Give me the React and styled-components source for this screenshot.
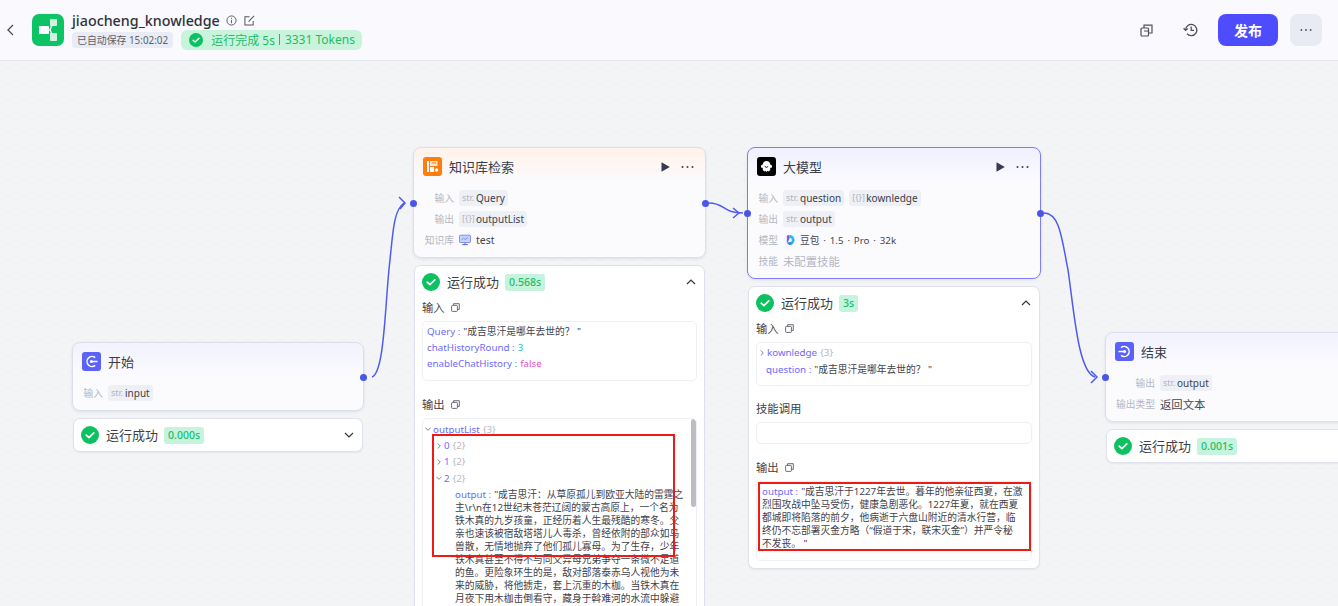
import React from "react";
import styled, { createGlobalStyle } from "styled-components";

const GlobalStyle = createGlobalStyle`
  html, body {
    margin: 0;
    padding: 0;
    height: 100%;
    overflow: hidden;
  }
  body {
    font-family: "Noto Sans", "Noto Sans CJK SC", sans-serif;
    color: #33353f;
  }
  #root {
    height: 100%;
  }
`;

const Page = styled.div`
  display: flex;
  flex-direction: column;
  width: 1338px;
  height: 606px;
  overflow: hidden;
`;

const Header = styled.header`
  position: relative;
  z-index: 1;
  flex: 0 0 60px;
  box-sizing: border-box;
  height: 60px;
  display: flex;
  align-items: center;
  justify-content: space-between;
  padding: 0 16px 0 7px;
  background: #f9f9fe;
  box-shadow: 0 1px 0 #e6e7ec;
`;

const HeaderLeft = styled.div`
  display: flex;
  align-items: center;
`;

const BackButton = styled.div`
  display: flex;
  width: 10px;
  margin-right: 15px;
  color: #4b4d57;
`;

const Logo = styled.div`
  width: 32px;
  height: 32px;
  border-radius: 7px;
  background: #0cc463;
  display: flex;
  align-items: center;
  justify-content: center;
  margin-right: 8px;
`;

const TitleBlock = styled.div`
  display: flex;
  flex-direction: column;
  gap: 1px;
  margin-top: 1px;
`;

const TitleRow = styled.div`
  display: flex;
  align-items: center;
  height: 17px;
  gap: 6px;
`;

const AppName = styled.span`
  font-size: 14.3px;
  font-weight: 500;
  line-height: 17px;
  color: #30323c;
`;

const EditGlyph = styled.svg`
  margin-left: 1px;
`;

const MetaRow = styled.div`
  display: flex;
  align-items: center;
  gap: 8px;
`;

const SaveTag = styled.span`
  height: 16px;
  line-height: 16px;
  padding: 0 5px;
  border-radius: 4px;
  background: #e9ecf5;
  color: #5d5f6a;
  font-size: 9.9px;
  white-space: nowrap;
`;

const StatusTag = styled.span`
  height: 20px;
  display: flex;
  align-items: center;
  padding: 0 7px 0 8px;
  border-radius: 6px;
  background: #c9f4dc;
  color: #1dbd67;
  font-size: 12px;
  white-space: nowrap;
`;

const StatusDivider = styled.span`
  width: 1px;
  height: 11px;
  margin: 0 5px 0 4px;
  background: #1dbd67;
`;

const StatusIcon = styled.span`
  display: flex;
  margin-right: 8px;
`;

const HeaderRight = styled.div`
  display: flex;
  align-items: center;
`;

const ToolIcon = styled.div`
  display: flex;
  width: 20px;
  justify-content: center;
  margin-right: ${(props) => props.$gap}px;
  color: #4f515c;
`;

const PublishButton = styled.button`
  width: 60px;
  height: 32px;
  border: 0;
  border-radius: 8px;
  background: #4d4dff;
  color: #fff;
  font-family: inherit;
  font-size: 14px;
  font-weight: 700;
  margin-right: 12px;
  padding: 0;
`;

const MoreButton = styled.div`
  width: 32px;
  height: 32px;
  border-radius: 8px;
  background: #e9ebf4;
  display: flex;
  align-items: center;
  justify-content: center;
  color: #4f515c;
`;

const Canvas = styled.main`
  position: relative;
  flex: 1;
  overflow: hidden;
  background-color: #f3f4f6;
  background-image: radial-gradient(#eceef1 1px, transparent 1px);
  background-size: 16px 16px;
`;

const Edges = styled.svg`
  position: absolute;
  left: 0;
  top: -60px;
  width: 1338px;
  height: 606px;
  pointer-events: none;
`;

/* nodes sit on a free canvas, their place is the content */
const NodeColumn = styled.section`
  position: absolute;
  left: ${(props) => props.$x}px;
  top: ${(props) => props.$y - 60}px;
  width: ${(props) => props.$w}px;
  display: flex;
  flex-direction: column;
  gap: 7px;
`;

const Node = styled.div`
  position: relative;
  box-sizing: border-box;
  height: ${(props) => props.$h}px;
  padding: 9px 10px 0 9px;
  border-radius: 8px;
  border: 1px solid ${(props) => (props.$active ? "#7d7dfb" : "#dcdfea")};
  box-shadow: 0 1px 3px rgba(40, 50, 90, 0.1);
  background: linear-gradient(
    180deg,
    ${(props) => props.$tint} 0,
    #fbfbfe 36px
  );
`;

const NodeHead = styled.div`
  display: flex;
  align-items: center;
  height: 19px;
  gap: 7px;
  margin-bottom: 11px;
`;

const NodeIcon = styled.div`
  flex: 0 0 19px;
  height: 19px;
  border-radius: 3px;
  background: ${(props) => props.$bg};
  display: flex;
  align-items: center;
  justify-content: center;
`;

const NodeTitle = styled.span`
  flex: 1;
  padding-top: 2px;
  font-size: 13px;
  color: #3a3c46;
  line-height: 19px;
`;

const NodeActions = styled.div`
  display: flex;
  align-items: center;
  gap: 11px;
  color: #3a3f50;
  margin-right: 1px;
`;

const FieldRow = styled.div`
  display: flex;
  align-items: center;
  height: 21px;
  font-size: 9.75px;
  gap: 5px;
`;

const FieldLabel = styled.span`
  flex: 0 0 ${(props) => props.$w}px;
  text-align: right;
  color: #b4b7c2;
  white-space: nowrap;
`;

const FieldText = styled.span`
  color: ${(props) => (props.$muted ? "#b4b7c2" : "#44464f")};
  font-size: ${(props) => props.$size}px;
  word-spacing: ${(props) => props.$spread || 0}px;
  white-space: nowrap;
`;

const TypeTag = styled.span`
  display: inline-flex;
  align-items: center;
  height: 16px;
  padding: 0 3px;
  gap: 1px;
  border-radius: 3px;
  background: #eef0f6;
  color: #3d3f49;
  font-size: 10px;
`;

const TypeMark = styled.span`
  flex: 0 0 13px;
  color: #b2b5c2;
  font-size: 9px;
  white-space: nowrap;
`;

const Port = styled.span`
  position: absolute;
  width: 7px;
  height: 7px;
  border-radius: 50%;
  background: #4a56e8;
  top: ${(props) => props.$top}px;
  ${(props) => (props.$side === "left" ? "left: -4px;" : "right: -4px;")}
`;

const Result = styled.div`
  position: relative;
  box-sizing: border-box;
  margin: 0 1px;
  padding: ${(props) => (props.$open ? "7px 7px 8px" : "7px")};
  height: ${(props) => (props.$h ? `${props.$h}px` : "auto")};
  border: 1px solid #dfe2ec;
  border-radius: 7px;
  background: #fff;
  box-shadow: 0 1px 2px rgba(40, 50, 90, 0.07);
`;

const ResultHead = styled.div`
  display: flex;
  align-items: center;
  height: 18px;
  gap: 7px;
`;

const ResultTitle = styled.span`
  margin-top: -1px;
  font-size: 13px;
  color: #3d3f49;
  white-space: nowrap;
`;

const TimeBadge = styled.span`
  height: 17px;
  line-height: 17px;
  margin-left: -1px;
  padding: 0 4px;
  border-radius: 3px;
  background: #c6f3dd;
  color: #1dbd67;
  font-size: 10.5px;
  font-weight: 500;
`;

const Chevron = styled.div`
  margin-left: auto;
  margin-right: 1px;
  display: flex;
  color: #33353f;
`;

const SectionTitle = styled.div`
  display: flex;
  align-items: center;
  gap: 6px;
  height: 14px;
  margin: ${(props) => props.$mt}px 0 7px;
  font-size: 11.375px;
  color: #3d3f49;
`;

const JsonBox = styled.div`
  position: relative;
  box-sizing: border-box;
  height: ${(props) => props.$h}px;
  padding: ${(props) => props.$pad || "1px 4px"};
  border: 1px solid #eff0f5;
  border-radius: 5px;
  background: #fff;
  overflow: hidden;
  font-size: 9.75px;
`;

const JsonLine = styled.div`
  display: flex;
  align-items: center;
  height: 16.4px;
  padding-left: ${(props) => props.$indent || 0}px;
  white-space: nowrap;
`;

const Key = styled.span`
  color: #6b6bfa;
  margin-right: ${(props) => (props.$tight ? 3 : 0)}px;
`;

const Quoted = styled.span`
  color: #3f414b;
`;

const NumberValue = styled.span`
  color: #2bbcd2;
`;

const BoolValue = styled.span`
  color: #e052c7;
`;

const Count = styled.span`
  color: #b6b9c4;
  margin-left: 3px;
`;

const Caret = styled.span`
  display: inline-flex;
  width: 6px;
  margin-right: 2px;
  color: #60626c;
`;

const LongText = styled.div`
  margin-top: ${(props) => props.$mt || 0}px;
  padding-left: ${(props) => props.$indent}px;
  font-size: 9.75px;
  line-height: 13px;
  color: #3f414b;
  white-space: nowrap;
`;

const ScrollThumb = styled.div`
  position: absolute;
  right: 0;
  top: 0;
  width: 5px;
  height: 88px;
  border-radius: 3px;
  background: #bcbdc1;
`;

const Marker = styled.div`
  position: absolute;
  left: ${(props) => props.$x}px;
  top: ${(props) => props.$y - 60}px;
  width: ${(props) => props.$w}px;
  height: ${(props) => props.$h}px;
  box-sizing: border-box;
  border: 2px solid #f01a14;
  pointer-events: none;
`;

const DoubaoSlot = styled.span`
  display: flex;
  margin-left: 2px;
`;

const CheckGlyph = styled.svg`
  flex-shrink: 0;
`;

const Play = () => (
  <svg width="9" height="10" viewBox="0 0 9 10">
    <path d="M0.5 0.3 L8.8 5 L0.5 9.7 Z" fill="#363b4d" />
  </svg>
);

const Dots = ({ size = 13 }) => (
  <svg width={size} height="4" viewBox="0 0 13 4" fill="currentColor">
    <circle cx="1.5" cy="2" r="1" />
    <circle cx="6.5" cy="2" r="1" />
    <circle cx="11.5" cy="2" r="1" />
  </svg>
);

const CheckCircle = ({ size = 18 }) => (
  <CheckGlyph width={size} height={size} viewBox="0 0 18 18">
    <circle cx="9" cy="9" r="9" fill="#0cc15f" />
    <path
      d="M5.2 9.2 L7.9 11.6 L12.8 6.8"
      fill="none"
      stroke="#fff"
      strokeWidth="1.7"
      strokeLinecap="round"
      strokeLinejoin="round"
    />
  </CheckGlyph>
);

const ChevronIcon = ({ up }) => (
  <svg width="10" height="6" viewBox="0 0 10 6">
    <path
      d={up ? "M1 5 L5 1 L9 5" : "M1 1 L5 5 L9 1"}
      fill="none"
      stroke="currentColor"
      strokeWidth="1.2"
    />
  </svg>
);

const CaretIcon = ({ open }) => (
  <svg width="6" height="6" viewBox="0 0 7 7">
    <path
      d={open ? "M0.5 2 L3.5 5 L6.5 2" : "M2 0.5 L5 3.5 L2 6.5"}
      fill="none"
      stroke="currentColor"
      strokeWidth="0.9"
    />
  </svg>
);

const CopyIcon = () => (
  <svg width="9" height="9" viewBox="0 0 9 9" fill="none" stroke="#5a5c66" strokeWidth="0.9">
    <rect x="0.6" y="2.4" width="5.8" height="6" rx="0.8" />
    <path d="M2.6 2.2 V0.7 H8.3 V6.4 H6.6" />
  </svg>
);

const StartIcon = () => (
  <svg width="13" height="13" viewBox="0 0 13 13" fill="none" stroke="#fff" strokeWidth="1.5">
    <path d="M10.2 2.6 A5 5 0 1 0 10.2 10.4" />
    <circle cx="6.4" cy="6.5" r="1.5" fill="#fff" stroke="none" />
    <path d="M6.4 6.5 H12.5" />
  </svg>
);

const EndIcon = () => (
  <svg width="13" height="13" viewBox="0 0 13 13" fill="none" stroke="#fff" strokeWidth="1.5">
    <path d="M3 2.6 A5 5 0 1 1 3 10.4" />
    <circle cx="6.6" cy="6.5" r="1.5" fill="#fff" stroke="none" />
    <path d="M0.5 6.5 H6.6" />
  </svg>
);

const KnowledgeIcon = () => (
  <svg width="13" height="13" viewBox="0 0 13 13" fill="none">
    <path d="M1 1 H3 V12 H1 Z" fill="#fff" />
    <path d="M4 1 H11.5 V6 H4 Z" fill="#ffe3cc" />
    <path d="M5.5 3 H10" stroke="#ff7d0d" strokeWidth="1" />
    <path d="M4 7 H8 V12 H4 Z" fill="#fff" />
    <circle cx="10.5" cy="10" r="1.8" fill="#fff" />
  </svg>
);

const ModelIcon = () => (
  <svg width="15" height="15" viewBox="0 0 15 15">
    <path
      d="M7.5 2 C9.8 2 11.2 3.6 11.2 5.6 C12.6 6 13.4 7 13 8 C12.6 9 11.7 9 11.2 8.8 L11.2 11 L9.7 12.6 L8.6 11.8 L7.5 13 L6.4 11.8 L5.3 12.6 L3.8 11 L3.8 8.8 C3.3 9 2.4 9 2 8 C1.6 7 2.4 6 3.8 5.6 C3.8 3.6 5.2 2 7.5 2 Z"
      fill="#fff"
    />
    <path d="M5.8 7.4 Q7.5 9.4 9.2 7.4" stroke="#000" strokeWidth="0.9" fill="none" />
  </svg>
);

const DoubaoIcon = () => (
  <svg width="10" height="12" viewBox="0 0 11 12">
    <path d="M2 1 L5 0.5 L5 4 L3.5 8 L2 9 Z" fill="#7a5cf0" />
    <path d="M5 0.5 C8 0.5 10.5 3 10.5 6 C10.5 9 8 11.5 5 11.5 L2 9 L5 8.5 C6.6 8.5 7.6 7.4 7.6 6 C7.6 4.6 6.6 3.5 5 3.5 Z" fill="#22b8ee" />
    <path d="M5 8.5 L2 9 L5 11.5 C6.4 11.5 7.6 11 8.5 10.2 Z" fill="#3c7df0" />
  </svg>
);

const MonitorIcon = () => (
  <svg width="12" height="12" viewBox="0 0 13 12">
    <rect x="0.5" y="0.8" width="12" height="8" rx="1" fill="#c9d2f8" stroke="#5c70e0" strokeWidth="0.8" />
    <path d="M2.5 6 L5 4 L7 5.4 L10 3" stroke="#5c70e0" strokeWidth="0.7" fill="none" />
    <path d="M3.5 11 H9.5 M6.5 9 V11" stroke="#4a5bd0" strokeWidth="1" />
  </svg>
);

const StatusRow = ({ time, open, closed }) => (
  <ResultHead>
    <CheckCircle />
    <ResultTitle>运行成功</ResultTitle>
    <TimeBadge>{time}</TimeBadge>
    {open && (
      <Chevron>
        <ChevronIcon up />
      </Chevron>
    )}
    {closed && (
      <Chevron>
        <ChevronIcon />
      </Chevron>
    )}
  </ResultHead>
);

const Tag = ({ mark, name }) => (
  <TypeTag>
    <TypeMark>{mark}</TypeMark>
    {name}
  </TypeTag>
);

const outputLines = [
  "主\\r\\n在12世纪末苍茫辽阔的蒙古高原上，一个名为",
  "铁木真的九岁孩童，正经历着人生最残酷的寒冬。父",
  "亲也速该被宿敌塔塔儿人毒杀，曾经依附的部众如鸟",
  "兽散，无情地抛弃了他们孤儿寡母。为了生存，少年",
  "铁木真甚至不得不与同父异母兄弟争夺一条微不足道",
  "的鱼。更险象环生的是，敌对部落泰赤乌人视他为未",
  "来的威胁，将他掳走，套上沉重的木枷。当铁木真在",
  "月夜下用木枷击倒看守，藏身于斡难河的水流中躲避",
  "追捕，一位名叫锁儿罕失剌的牧人冒险救下了他。",
];

const modelLines = [
  "烈围攻战中坠马受伤，健康急剧恶化。1227年夏，就在西夏",
  "都城即将陷落的前夕，他病逝于六盘山附近的清水行营，临",
  "终仍不忘部署灭金方略（“假道于宋，联宋灭金”）并严令秘",
  '不发丧。 "',
];

export default function App() {
  return (
    <Page>
      <GlobalStyle />
      <Header>
        <HeaderLeft>
          <BackButton>
            <svg width="7" height="12" viewBox="0 0 7 12">
              <path d="M6 1 L1 6 L6 11" fill="none" stroke="currentColor" strokeWidth="1.3" />
            </svg>
          </BackButton>
          <Logo>
            <svg width="18" height="22" viewBox="0 0 18 22" fill="#fff">
              <rect x="0" y="7" width="10" height="8" rx="0.8" />
              <rect x="11" y="0" width="7" height="7" rx="0.8" opacity="0.8" />
              <rect x="11" y="14" width="7" height="8" rx="0.8" opacity="0.8" />
              <path d="M9 11 H11 L13 6 M11 11 L13 15" stroke="#fff" strokeWidth="1.5" fill="none" opacity="0.85" />
            </svg>
          </Logo>
          <TitleBlock>
            <TitleRow>
              <AppName>jiaocheng_knowledge</AppName>
              <svg width="11" height="11" viewBox="0 0 12 12" fill="none" stroke="#55575f" strokeWidth="1">
                <circle cx="6" cy="6" r="5" />
                <path d="M6 5.4 V9 M6 3 V4.2" />
              </svg>
              <EditGlyph width="11" height="11" viewBox="0 0 12 12" fill="none" stroke="#55575f" strokeWidth="1.1">
                <path d="M10 6.5 V11 H1 V2 H6" />
                <path d="M5 7.2 L11 1" />
              </EditGlyph>
            </TitleRow>
            <MetaRow>
              <SaveTag>已自动保存 15:02:02</SaveTag>
              <StatusTag>
                <StatusIcon>
                  <CheckCircle size={14} />
                </StatusIcon>
                运行完成 5s
                <StatusDivider />
                3331 Tokens
              </StatusTag>
            </MetaRow>
          </TitleBlock>
        </HeaderLeft>
        <HeaderRight>
          <ToolIcon $gap={24}>
            <svg width="13" height="13" viewBox="0 0 13 13" fill="none" stroke="currentColor" strokeWidth="1.2">
              <rect x="1" y="4" width="7.5" height="8" rx="1" />
              <path d="M4 4 V1.2 H12 V9 H8.5 M4 7 H8.5" />
            </svg>
          </ToolIcon>
          <ToolIcon $gap={18}>
            <svg width="15" height="14" viewBox="0 0 15 14" fill="none" stroke="currentColor" strokeWidth="1.3">
              <path d="M2.6 7 A5.6 5.6 0 1 1 4 10.8" />
              <path d="M0.6 5.2 L2.6 7.4 L4.8 5.4" />
              <path d="M8.2 3.6 V7.4 H11" />
            </svg>
          </ToolIcon>
          <PublishButton>发布</PublishButton>
          <MoreButton>
            <Dots size={12} />
          </MoreButton>
        </HeaderRight>
      </Header>

      <Canvas>
        <Edges viewBox="0 0 1338 606" fill="none" stroke="#4f5bec" strokeWidth="1.5">
          <path d="M372 377 C385 372 385 300 390 260 C393 230 394 210 404 203" />
          <path d="M399 197 L405 203 L400 209" />
          <path d="M709 203 C725 203 722 213 743 213" />
          <path d="M733 208 L739 213 L733 218" />
          <path d="M1044 213 C1060 213 1062 240 1068 270 C1074 310 1078 372 1095 377" />
          <path d="M1091 371 L1097 377 L1091 383" />
        </Edges>

        <NodeColumn $x={72} $y={342} $w={292}>
          <Node $h={69} $tint="#f2f2ff">
            <NodeHead>
              <NodeIcon $bg="#5a62f8">
                <StartIcon />
              </NodeIcon>
              <NodeTitle>开始</NodeTitle>
            </NodeHead>
            <FieldRow>
              <FieldLabel $w={21}>输入</FieldLabel>
              <Tag mark="str." name="input" />
            </FieldRow>
            <Port $side="right" $top={31} />
          </Node>
          <Result>
            <StatusRow time="0.000s" closed />
          </Result>
        </NodeColumn>

        <NodeColumn $x={413} $y={147} $w={293}>
          <Node $h={111} $tint="#fff2ea">
            <NodeHead>
              <NodeIcon $bg="#ff7d0d">
                <KnowledgeIcon />
              </NodeIcon>
              <NodeTitle>知识库检索</NodeTitle>
              <NodeActions>
                <Play />
                <Dots />
              </NodeActions>
            </NodeHead>
            <FieldRow>
              <FieldLabel $w={31}>输入</FieldLabel>
              <Tag mark="str." name="Query" />
            </FieldRow>
            <FieldRow>
              <FieldLabel $w={31}>输出</FieldLabel>
              <Tag mark="[{}]" name="outputList" />
            </FieldRow>
            <FieldRow>
              <FieldLabel $w={31}>知识库</FieldLabel>
              <MonitorIcon />
              <FieldText $size={10.5}>test</FieldText>
            </FieldRow>
            <Port $side="left" $top={52} />
            <Port $side="right" $top={52} />
          </Node>
          <Result $open $h={400}>
            <StatusRow time="0.568s" open />
            <SectionTitle $mt={9}>
              输入
              <CopyIcon />
            </SectionTitle>
            <JsonBox $h={60}>
              <JsonLine>
                <Key $tight>Query :</Key>
                <Quoted>"成吉思汗是哪年去世的？ "</Quoted>
              </JsonLine>
              <JsonLine>
                <Key $tight>chatHistoryRound :</Key>
                <NumberValue>3</NumberValue>
              </JsonLine>
              <JsonLine>
                <Key $tight>enableChatHistory :</Key>
                <BoolValue>false</BoolValue>
              </JsonLine>
            </JsonBox>
            <SectionTitle $mt={16}>
              输出
              <CopyIcon />
            </SectionTitle>
            <JsonBox $h={260} $pad="2px 0 0 2px">
              <JsonLine>
                <Caret>
                  <CaretIcon open />
                </Caret>
                <Key>outputList</Key>
                <Count>{"{3}"}</Count>
              </JsonLine>
              <JsonLine $indent={11}>
                <Caret>
                  <CaretIcon />
                </Caret>
                <Key>0</Key>
                <Count>{"{2}"}</Count>
              </JsonLine>
              <JsonLine $indent={11}>
                <Caret>
                  <CaretIcon />
                </Caret>
                <Key>1</Key>
                <Count>{"{2}"}</Count>
              </JsonLine>
              <JsonLine $indent={11}>
                <Caret>
                  <CaretIcon open />
                </Caret>
                <Key>2</Key>
                <Count>{"{2}"}</Count>
              </JsonLine>
              <LongText $indent={30} $mt={1}>
                <Key $tight>output :</Key>"成吉思汗：从草原孤儿到欧亚大陆的雷霆之
                {outputLines.map((line) => (
                  <div key={line}>{line}</div>
                ))}
              </LongText>
              <ScrollThumb />
            </JsonBox>
          </Result>
        </NodeColumn>

        <NodeColumn $x={747} $y={147} $w={294}>
          <Node $h={132} $tint="#f0f0ff" $active>
            <NodeHead>
              <NodeIcon $bg="#000">
                <ModelIcon />
              </NodeIcon>
              <NodeTitle>大模型</NodeTitle>
              <NodeActions>
                <Play />
                <Dots />
              </NodeActions>
            </NodeHead>
            <FieldRow>
              <FieldLabel $w={21}>输入</FieldLabel>
              <Tag mark="str." name="question" />
              <Tag mark="[{}]" name="kownledge" />
            </FieldRow>
            <FieldRow>
              <FieldLabel $w={21}>输出</FieldLabel>
              <Tag mark="str." name="output" />
            </FieldRow>
            <FieldRow>
              <FieldLabel $w={21}>模型</FieldLabel>
              <DoubaoSlot>
                <DoubaoIcon />
              </DoubaoSlot>
              <FieldText $size={9.75} $spread={1.3}>
                豆包 · 1.5 · Pro · 32k
              </FieldText>
            </FieldRow>
            <FieldRow>
              <FieldLabel $w={21}>技能</FieldLabel>
              <FieldText $muted $size={11.375}>
                未配置技能
              </FieldText>
            </FieldRow>
            <Port $side="left" $top={62} />
            <Port $side="right" $top={62} />
          </Node>
          <Result $open $h={283}>
            <StatusRow time="3s" open />
            <SectionTitle $mt={9}>
              输入
              <CopyIcon />
            </SectionTitle>
            <JsonBox $h={44} $pad="1.5px 2px">
              <JsonLine>
                <Caret>
                  <CaretIcon />
                </Caret>
                <Key>kownledge</Key>
                <Count>{"{3}"}</Count>
              </JsonLine>
              <JsonLine $indent={7}>
                <Key $tight>question :</Key>
                <Quoted>"成吉思汗是哪年去世的？ "</Quoted>
              </JsonLine>
            </JsonBox>
            <SectionTitle $mt={15}>技能调用</SectionTitle>
            <JsonBox $h={22} />
            <SectionTitle $mt={16}>
              输出
              <CopyIcon />
            </SectionTitle>
            <JsonBox $h={80} $pad="3px 5px">
              <LongText $indent={0}>
                <Key $tight>output :</Key>"成吉思汗于1227年去世。暮年的他亲征西夏，在激
                {modelLines.map((line) => (
                  <div key={line}>{line}</div>
                ))}
              </LongText>
            </JsonBox>
          </Result>
        </NodeColumn>

        <NodeColumn $x={1105} $y={332} $w={292}>
          <Node $h={90} $tint="#f2f2ff">
            <NodeHead>
              <NodeIcon $bg="#5a62f8">
                <EndIcon />
              </NodeIcon>
              <NodeTitle>结束</NodeTitle>
            </NodeHead>
            <FieldRow>
              <FieldLabel $w={40}>输出</FieldLabel>
              <Tag mark="str." name="output" />
            </FieldRow>
            <FieldRow>
              <FieldLabel $w={40}>输出类型</FieldLabel>
              <FieldText $size={11.375}>返回文本</FieldText>
            </FieldRow>
            <Port $side="left" $top={41} />
          </Node>
          <Result>
            <StatusRow time="0.001s" />
          </Result>
        </NodeColumn>

        <Marker $x={432} $y={434} $w={243} $h={123} />
        <Marker $x={758} $y={482} $w={273} $h={69} />
      </Canvas>
    </Page>
  );
}
